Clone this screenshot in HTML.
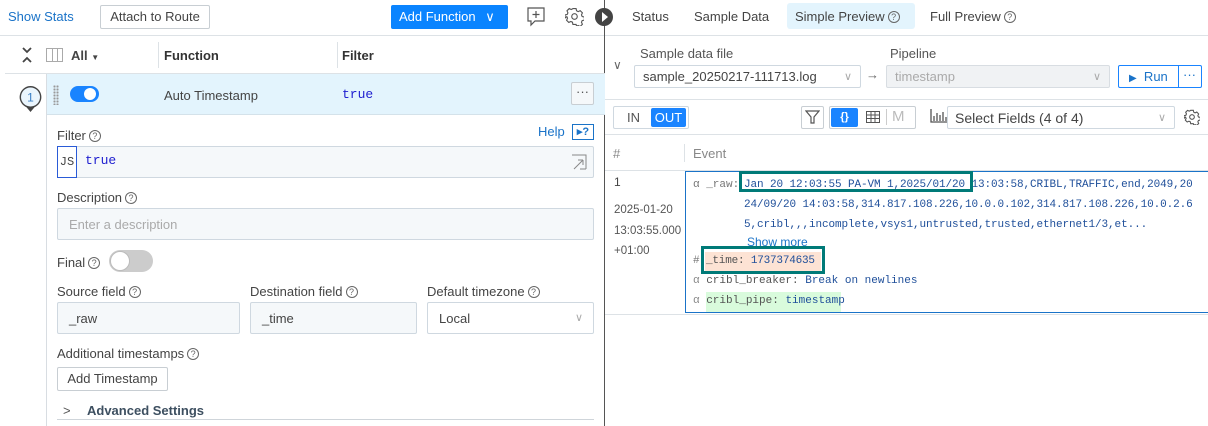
<!DOCTYPE html>
<html><head><meta charset="utf-8"><style>
*{box-sizing:border-box;margin:0;padding:0}
body{width:1208px;height:426px;overflow:hidden;background:#fff;font-family:"Liberation Sans",sans-serif;font-size:13px;color:#333;position:relative}
.a{position:absolute}
.mono{font-family:"Liberation Mono","DejaVu Sans Mono",monospace}
.lbl{font-size:13px;color:#444}
.q{display:inline-block;width:12px;height:12px;border:1px solid #666;border-radius:50%;font-size:9px;line-height:10px;text-align:center;color:#666;vertical-align:1px;margin-left:3px}
.inp{border:1px solid #cfd8e0;background:#f5f8fa;border-radius:2px}
.btn{border:1px solid #c8ced3;border-radius:2px;background:#fff}
.chev{color:#aaa;font-size:11px}
</style></head><body>
<div class="a" style="left:8px;top:9px;color:#1a73c8;font-size:13px">Show Stats</div>
<div class="a btn" style="left:100px;top:5px;width:110px;height:24px;text-align:center;line-height:22px;color:#444">Attach to Route</div>
<div class="a" style="left:391px;top:5px;width:117px;height:24px;background:#0a84ff;border-radius:2px;color:#fff;line-height:24px;padding-left:8px;font-size:13px">Add Function <span style="margin-left:6px">&#8744;</span></div>
<svg class="a" style="left:526px;top:6px" width="20" height="22" viewBox="0 0 20 22"><path d="M2 2h16v13H9l-4 4v-4H2z" fill="none" stroke="#555" stroke-width="1.2"/><path d="M10 5v7M6.5 8.5h7" stroke="#555" stroke-width="1.2"/></svg>
<svg class="a" style="left:565px;top:7px" width="19" height="19" viewBox="0 0 24 24"><path d="M12 8.5a3.5 3.5 0 1 0 0 7a3.5 3.5 0 1 0 0-7zM10 2h4l.6 2.8 2 1 2.6-1.2 2.8 2.8-1.2 2.6.9 2 2.8.6v4l-2.8.6-.9 2 1.2 2.6-2.8 2.8-2.6-1.2-2 .9L14 22h-4l-.6-2.8-2-.9-2.6 1.2-2.8-2.8 1.2-2.6-.9-2L0 14v-4l2.8-.6.9-2-1.2-2.6 2.8-2.8 2.6 1.2 2-1z" fill="none" stroke="#555" stroke-width="1.4"/></svg>
<div class="a" style="left:0;top:35px;width:605px;height:1px;background:#dde2e6"></div>
<div class="a" style="left:604px;top:0;width:1px;height:426px;background:#555"></div>
<div class="a" style="left:595px;top:8px;width:18px;height:18px;border-radius:50%;background:#444"></div>
<div class="a" style="left:602px;top:12px;width:0;height:0;border-left:6px solid #fff;border-top:5px solid transparent;border-bottom:5px solid transparent"></div>
<svg class="a" style="left:21px;top:47px" width="12" height="16" viewBox="0 0 12 16"><path d="M2 1l4 4 4-4M2 15l4-4 4 4" fill="none" stroke="#444" stroke-width="1.8"/></svg>
<div class="a" style="left:46px;top:48px;width:17px;height:14px;border:1px solid #aaa"></div>
<div class="a" style="left:52px;top:48px;width:1px;height:14px;background:#aaa"></div>
<div class="a" style="left:57px;top:48px;width:1px;height:14px;background:#aaa"></div>
<div class="a" style="left:71px;top:48px;font-weight:bold;color:#444">All <span style="font-size:8px">&#9660;</span></div>
<div class="a" style="left:158px;top:42px;width:1px;height:26px;background:#dde2e6"></div>
<div class="a" style="left:164px;top:48px;font-weight:bold;color:#333">Function</div>
<div class="a" style="left:337px;top:42px;width:1px;height:26px;background:#dde2e6"></div>
<div class="a" style="left:342px;top:48px;font-weight:bold;color:#333">Filter</div>
<div class="a" style="left:5px;top:73px;width:600px;height:1px;background:#dde2e6"></div>
<div class="a" style="left:46px;top:74px;width:559px;height:41px;background:#e3f4fd;border-bottom:1px solid #d4e2ea"></div>
<div class="a" style="left:46px;top:74px;width:1px;height:352px;background:#d8dde2"></div>
<svg class="a" style="left:17px;top:84px" width="27" height="30" viewBox="0 0 27 30"><path d="M13.5 2a11 11 0 0 1 4 21.2L13.5 28l-4-4.8A11 11 0 0 1 13.5 2z" fill="#444"/><circle cx="13.5" cy="13" r="9.5" fill="#eaf5fd"/><text x="13.5" y="17.5" font-size="12" text-anchor="middle" fill="#3a7fc4" font-family="Liberation Sans">1</text></svg>
<div class="a" style="left:53px;top:85px;width:6px;height:20px;background-image:radial-gradient(#999 1px,transparent 1.2px);background-size:3px 3px"></div>
<div class="a" style="left:70px;top:86px;width:29px;height:16px;border-radius:8px;background:#1a84ff"></div>
<div class="a" style="left:84px;top:88px;width:12px;height:12px;border-radius:50%;background:#fff"></div>
<div class="a" style="left:164px;top:88px;color:#444">Auto Timestamp</div>
<div class="a mono" style="left:342px;top:87px;color:#2020d0;font-size:13px">true</div>
<div class="a btn" style="left:571px;top:82px;width:23px;height:23px;text-align:center;line-height:18px;color:#555;background:#f5f8fa">&middot;&middot;&middot;</div>
<div class="a lbl" style="left:57px;top:128px">Filter<span class="q">?</span></div>
<div class="a" style="left:538px;top:124px;color:#1a73c8">Help</div>
<div class="a" style="left:572px;top:124px;width:22px;height:16px;border:1px solid #1a73c8;color:#1a73c8;font-size:11px;font-weight:bold;line-height:14px;text-align:center">&#9656;?</div>
<div class="a inp" style="left:57px;top:146px;width:537px;height:32px"></div>
<div class="a mono" style="left:57px;top:146px;width:20px;height:32px;border:1px solid #2a5bd7;font-size:12px;line-height:30px;text-align:center;color:#444;background:#fff">JS</div>
<div class="a mono" style="left:85px;top:153px;color:#2020d0;font-size:13px">true</div>
<svg class="a" style="left:571px;top:154px" width="16" height="16" viewBox="0 0 16 16"><path d="M1 1h14v14M15 15H9M3 15l9-9M12 6v5M12 6H7" fill="none" stroke="#888" stroke-width="1"/></svg>
<div class="a lbl" style="left:57px;top:190px">Description<span class="q">?</span></div>
<div class="a inp" style="left:57px;top:208px;width:537px;height:32px;color:#aaa;padding:8px 11px">Enter a description</div>
<div class="a lbl" style="left:57px;top:255px">Final<span class="q">?</span></div>
<div class="a" style="left:109px;top:250px;width:44px;height:22px;border-radius:11px;background:#ccc"></div>
<div class="a" style="left:110px;top:251px;width:20px;height:20px;border-radius:50%;background:#fff;border:1px solid #bbb"></div>
<div class="a lbl" style="left:57px;top:284px">Source field<span class="q">?</span></div>
<div class="a lbl" style="left:250px;top:284px">Destination field<span class="q">?</span></div>
<div class="a lbl" style="left:427px;top:284px">Default timezone<span class="q">?</span></div>
<div class="a inp" style="left:57px;top:302px;width:183px;height:32px;padding:8px 11px;color:#444">_raw</div>
<div class="a inp" style="left:250px;top:302px;width:167px;height:32px;padding:8px 11px;color:#444">_time</div>
<div class="a" style="left:427px;top:302px;width:167px;height:32px;border:1px solid #cfd8e0;border-radius:2px;padding:8px 11px;color:#444">Local<span class="chev" style="position:absolute;right:10px;top:8px">&#8744;</span></div>
<div class="a lbl" style="left:57px;top:346px">Additional timestamps<span class="q">?</span></div>
<div class="a btn" style="left:57px;top:367px;width:111px;height:24px;line-height:22px;text-align:center;color:#444">Add Timestamp</div>
<div class="a" style="left:63px;top:403px;color:#555">&gt;</div>
<div class="a" style="left:87px;top:403px;color:#3d4f60;font-weight:bold">Advanced Settings</div>
<div class="a" style="left:57px;top:419px;width:537px;height:1px;background:#cfd5da"></div>

<div class="a" style="left:632px;top:9px;color:#444">Status</div>
<div class="a" style="left:694px;top:9px;color:#444">Sample Data</div>
<div class="a" style="left:787px;top:3px;width:128px;height:26px;background:#e3f4fd;border-radius:3px"></div>
<div class="a" style="left:795px;top:9px;color:#444">Simple Preview<span class="q">?</span></div>
<div class="a" style="left:930px;top:9px;color:#444">Full Preview<span class="q">?</span></div>
<div class="a" style="left:605px;top:35px;width:603px;height:1px;background:#dde2e6"></div>
<div class="a" style="left:613px;top:58px;color:#666;font-size:12px">&#8744;</div>
<div class="a" style="left:640px;top:46px;color:#555">Sample data file</div>
<div class="a" style="left:634px;top:65px;width:227px;height:23px;border:1px solid #cfd8e0;border-radius:2px;padding:3px 8px;color:#444">sample_20250217-111713.log<span class="chev" style="position:absolute;right:8px;top:4px">&#8744;</span></div>
<div class="a" style="left:866px;top:67px;color:#666">&#8594;</div>
<div class="a" style="left:890px;top:46px;color:#555">Pipeline</div>
<div class="a" style="left:886px;top:65px;width:224px;height:23px;border:1px solid #d8dde2;border-radius:2px;background:#f0f2f4;padding:3px 8px;color:#aaa">timestamp<span class="chev" style="position:absolute;right:8px;top:4px">&#8744;</span></div>
<div class="a" style="left:1118px;top:65px;width:84px;height:23px;border:1px solid #1a84ff;border-radius:2px"></div>
<div class="a" style="left:1178px;top:65px;width:1px;height:23px;background:#1a84ff"></div>
<div class="a" style="left:1129px;top:69px;color:#1a73c8;font-size:13px"><span style="font-size:10px">&#9654;</span>&nbsp;&nbsp;Run</div>
<div class="a" style="left:1183px;top:67px;color:#1a73c8">&middot;&middot;&middot;</div>
<div class="a" style="left:605px;top:99px;width:603px;height:1px;background:#dde2e6"></div>
<div class="a" style="left:613px;top:106px;width:76px;height:23px;border:1px solid #cfd8e0;border-radius:2px"></div>
<div class="a" style="left:627px;top:110px;color:#555">IN</div>
<div class="a" style="left:651px;top:108px;width:35px;height:19px;background:#1a84ff;border-radius:2px;color:#fff;text-align:center;line-height:19px">OUT</div>
<div class="a btn" style="left:801px;top:106px;width:23px;height:23px"></div>
<svg class="a" style="left:805px;top:110px" width="15" height="15" viewBox="0 0 15 15"><path d="M1 1h13L9 7v6H6V7z" fill="none" stroke="#555" stroke-width="1.2"/></svg>
<div class="a btn" style="left:829px;top:106px;width:87px;height:23px"></div>
<div class="a" style="left:831px;top:108px;width:27px;height:19px;background:#1a84ff;border-radius:2px;color:#fff;text-align:center;line-height:18px;font-size:11px;font-weight:bold">{}</div>
<svg class="a" style="left:866px;top:111px" width="14" height="12" viewBox="0 0 14 12"><path d="M0.5 0.5h13v11H0.5zM0.5 4h13M0.5 7.5h13M5 0.5v11M9 0.5v11" fill="none" stroke="#555" stroke-width="1"/></svg>
<div class="a" style="left:886px;top:109px;width:1px;height:16px;background:#ccc"></div>
<div class="a" style="left:892px;top:108px;color:#bbb;font-size:15px">M</div>
<svg class="a" style="left:930px;top:109px" width="17" height="14" viewBox="0 0 17 14"><path d="M1 0v13h16M4 12V7M7 12V4M10 12V6M13 12V3M16 12V8" fill="none" stroke="#555" stroke-width="1.3"/></svg>
<div class="a" style="left:947px;top:106px;width:228px;height:23px;border:1px solid #cfd8e0;border-radius:2px;padding:3px 7px;color:#444;font-size:14px">Select Fields (4 of 4)<span class="chev" style="position:absolute;right:8px;top:4px">&#8744;</span></div>
<svg class="a" style="left:1184px;top:109px" width="16" height="16" viewBox="0 0 24 24"><path d="M12 8.5a3.5 3.5 0 1 0 0 7a3.5 3.5 0 1 0 0-7zM10 2h4l.6 2.8 2 1 2.6-1.2 2.8 2.8-1.2 2.6.9 2 2.8.6v4l-2.8.6-.9 2 1.2 2.6-2.8 2.8-2.6-1.2-2 .9L14 22h-4l-.6-2.8-2-.9-2.6 1.2-2.8-2.8 1.2-2.6-.9-2L0 14v-4l2.8-.6.9-2-1.2-2.6 2.8-2.8 2.6 1.2 2-1z" fill="none" stroke="#555" stroke-width="1.6"/></svg>
<div class="a" style="left:605px;top:134px;width:603px;height:1px;background:#dde2e6"></div>
<div class="a" style="left:613px;top:146px;color:#888">#</div>
<div class="a" style="left:684px;top:144px;width:1px;height:18px;background:#dde2e6"></div>
<div class="a" style="left:693px;top:146px;color:#888">Event</div>
<div class="a" style="left:605px;top:170px;width:603px;height:1px;background:#dde2e6"></div>
<div class="a" style="left:614px;top:175px;color:#444;font-size:12px">1</div>
<div class="a" style="left:614px;top:200px;color:#555;font-size:11.5px;line-height:20.5px">2025-01-20<br>13:03:55.000<br>+01:00</div>
<div class="a" style="left:685px;top:171px;width:523px;height:142px;border:1px solid #1a73c8;border-right:none"></div>
<div class="a" style="left:605px;top:314px;width:603px;height:1px;background:#dde2e6"></div>
<div class="a mono" style="left:693px;top:175px;font-size:11px;line-height:20px;color:#777;white-space:pre">α _raw:</div>
<div class="a mono" style="left:744px;top:175px;font-size:11px;line-height:20px;color:#1f4f9a;white-space:pre;letter-spacing:-0.1px">Jan 20 12:03:55 PA-VM 1,2025/01/20 13:03:58,CRIBL,TRAFFIC,end,2049,20
24/09/20 14:03:58,314.817.108.226,10.0.0.102,314.817.108.226,10.0.2.6
5,cribl,,,incomplete,vsys1,untrusted,trusted,ethernet1/3,et...</div>
<div class="a" style="left:739px;top:171px;width:234px;height:21px;border:3px solid #007a78"></div>
<div class="a" style="left:747px;top:235px;color:#1a73c8;font-size:12px">Show more</div>
<div class="a mono" style="left:693px;top:255px;font-size:11px;color:#777">#</div>
<div class="a" style="left:705px;top:252px;width:116px;height:20px;background:#fde3d4"></div>
<div class="a mono" style="left:706px;top:255px;font-size:11px;white-space:pre;color:#555;letter-spacing:-0.2px">_time: <span style="color:#1f4f9a">1737374635</span></div>
<div class="a" style="left:701px;top:246px;width:124px;height:28px;border:3px solid #007a78"></div>
<div class="a mono" style="left:693px;top:275px;font-size:11px;white-space:pre;color:#555"><span style="color:#888">α</span> cribl_breaker: <span style="color:#1f4f9a">Break on newlines</span></div>
<div class="a" style="left:706px;top:292px;width:135px;height:20px;background:#d9fbdc"></div>
<div class="a mono" style="left:693px;top:295px;font-size:11px;white-space:pre;color:#555"><span style="color:#888">α</span> cribl_pipe: <span style="color:#1f4f9a">timestamp</span></div>
</body></html>
